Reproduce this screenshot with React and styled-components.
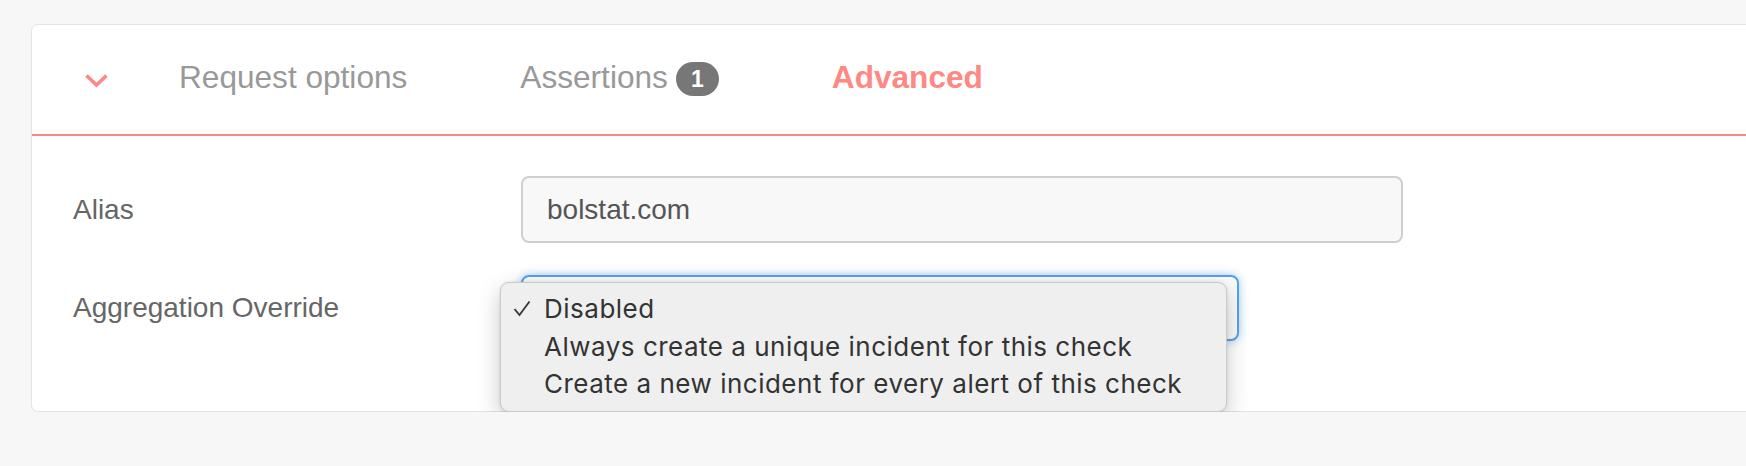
import React from "react";
import styled, { createGlobalStyle } from "styled-components";

const GlobalStyle = createGlobalStyle`
  html, body {
    margin: 0;
    padding: 0;
    background: #f7f7f7;
    overflow: hidden;
  }
  body {
    font-family: "Liberation Sans", Arial, sans-serif;
  }
`;

const tabs = [
  { label: "Request options" },
  { label: "Assertions", badge: 1 },
  { label: "Advanced", active: true },
];

const options = [
  { label: "Disabled", selected: true },
  { label: "Always create a unique incident for this check" },
  { label: "Create a new incident for every alert of this check" },
];

const Chevron = () => (
  <ChevronIcon width="25" height="15" viewBox="0 0 25 15">
    <polyline points="2.5,2.5 12.5,12 22.5,2.5" fill="none" stroke="#ff8884" strokeWidth="3.6" />
  </ChevronIcon>
);

const Check = () => (
  <svg width="18" height="17" viewBox="0 0 18 17">
    <polyline points="1.5,9 6.5,15 16.5,1.5" fill="none" stroke="#3a3a3a" strokeWidth="1.9" />
  </svg>
);

export default function App() {
  return (
    <>
      <GlobalStyle />
      <Card>
        <Header>
          <Chevron />
          <Tabs>
            {tabs.map(tab => (
              <Tab key={tab.label} active={tab.active}>
                {tab.label}
                {tab.badge && <Badge>{tab.badge}</Badge>}
              </Tab>
            ))}
          </Tabs>
        </Header>
        <Body>
          <Row>
            <Label>Alias</Label>
            <Input>bolstat.com</Input>
          </Row>
          <Row>
            <Label>Aggregation Override</Label>
            <SelectWrap>
              <Select>
                <SelectValue>Disabled</SelectValue>
                <SelectArrows width="10" height="18" viewBox="0 0 10 18">
                  <polyline points="1.5,6 5,2 8.5,6" fill="none" stroke="#444" strokeWidth="2" />
                  <polyline points="1.5,12 5,16 8.5,12" fill="none" stroke="#444" strokeWidth="2" />
                </SelectArrows>
              </Select>
              <Menu>
                {options.map(opt => (
                  <MenuItem key={opt.label}>
                    <CheckCol>{opt.selected && <Check />}</CheckCol>
                    {opt.label}
                  </MenuItem>
                ))}
              </Menu>
            </SelectWrap>
          </Row>
        </Body>
      </Card>
    </>
  );
}

const Card = styled.div`
  margin: 24px -20px 0 31px;
  height: 388px;
  box-sizing: border-box;
  background: #fff;
  border: 1px solid #e4e4e4;
  border-radius: 7px;
  box-shadow: 0 1px 2px rgba(0, 0, 0, 0.04);
`;

const Header = styled.div`
  display: flex;
  align-items: center;
  height: 111px;
  box-sizing: border-box;
  padding: 0 0 4px 52px;
  border-bottom: 2px solid #f58987;
`;

const ChevronIcon = styled.svg`
  flex: none;
  margin: 5px 70px 0 0;
`;

const Tabs = styled.div`
  display: flex;
  align-items: center;
  gap: 113px;
`;

const Tab = styled.div`
  display: inline-flex;
  align-items: center;
  font-size: 31.6px;
  line-height: 31px;
  color: ${p => (p.active ? "#ff8884" : "#999")};
  font-weight: ${p => (p.active ? 700 : 400)};
  white-space: nowrap;
`;

const Badge = styled.span`
  display: inline-flex;
  align-items: center;
  justify-content: center;
  width: 43px;
  height: 34px;
  margin: 3px 0 0 8px;
  border-radius: 17px;
  background: #777;
  color: #fff;
  font-size: 23px;
  font-weight: 700;
`;

const Body = styled.div`
  display: flex;
  flex-direction: column;
  gap: 32px;
  padding: 40px 0 0 41px;
`;

const Row = styled.div`
  display: flex;
  align-items: center;
`;

const Label = styled.div`
  width: 448px;
  flex: none;
  font-size: 28px;
  line-height: 32px;
  color: #666;
`;

const Input = styled.div`
  display: flex;
  align-items: center;
  width: 882px;
  height: 67px;
  box-sizing: border-box;
  padding: 0 24px;
  background: #f8f8f8;
  border: 2px solid #cfcfcf;
  border-radius: 8px;
  font-size: 28px;
  color: #555;
`;

const SelectWrap = styled.div`
  position: relative;
`;

const Select = styled.div`
  display: flex;
  align-items: center;
  justify-content: space-between;
  width: 718px;
  height: 66px;
  box-sizing: border-box;
  padding: 0 10px 0 24px;
  background: #fafafa;
  border: 2px solid #5aa1e3;
  border-radius: 8px;
  box-shadow: 0 0 10px rgba(82, 160, 236, 0.55);
  font-size: 28px;
  color: #555;
`;

const SelectValue = styled.span`
  visibility: hidden;
`;

const SelectArrows = styled.svg`
  flex: none;
`;

const Menu = styled.div`
  position: absolute;
  left: -21px;
  top: 7px;
  width: 727px;
  height: 130px;
  box-sizing: border-box;
  padding: 7px 0 0 0;
  background: #efefef;
  border: 1px solid #cacaca;
  border-radius: 9px;
  box-shadow: 0 8px 22px rgba(0, 0, 0, 0.22), 0 0 3px rgba(0, 0, 0, 0.1);
  font-family: Inter, "Noto Sans", sans-serif;
  font-size: 26px;
  letter-spacing: 0.5px;
  color: #333;
`;

const MenuItem = styled.div`
  display: flex;
  align-items: center;
  height: 37.5px;
  padding-left: 12px;
  white-space: nowrap;
`;

const CheckCol = styled.span`
  display: inline-flex;
  width: 31px;
  flex: none;
`;
